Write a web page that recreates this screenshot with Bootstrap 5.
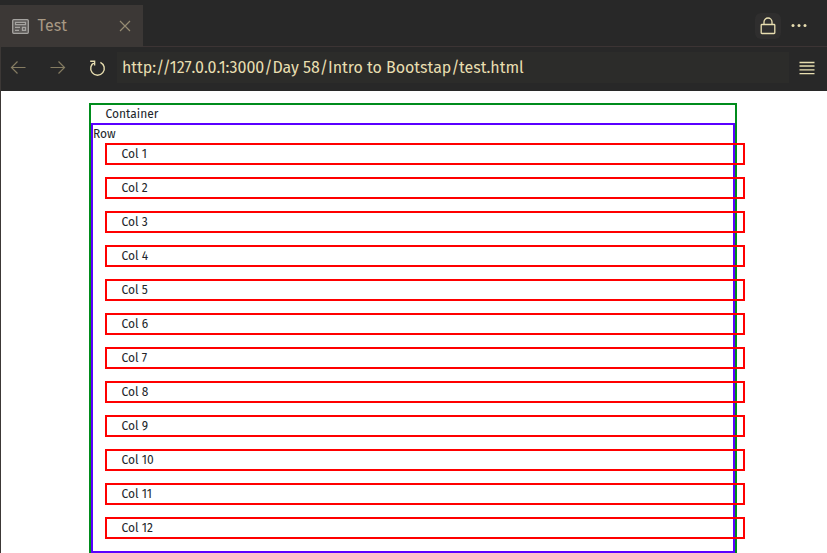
<!DOCTYPE html>
<html lang="en">
<head>
<meta charset="utf-8">
<meta name="viewport" content="width=device-width, initial-scale=1">
<title>Test</title>
<link href="https://cdn.jsdelivr.net/npm/bootstrap@5.3.0/dist/css/bootstrap.min.css" rel="stylesheet">
<style>
body{height:553px;overflow:hidden;background:#282828;font-family:"Fira Sans","Noto Sans",sans-serif}
svg{display:block;flex:none;fill:none;stroke:currentColor}
.tab-strip{height:47px;padding-top:5px;border-bottom:1px solid #3c3434}
.editor-tab{width:143px;height:42px;background:#3c3836;color:#a89984;padding:0 12px;margin-bottom:-1px}
.tab-icon{color:#a5a3a0}
.tab-title{font-size:16px;line-height:20px;margin-left:8.6px}
.tab-close{color:#958b72}
.actions{color:#e8deb0;padding-right:20px}
.lock-btn{width:26px;height:26px;border-radius:6px;background:#2f2e2e;margin-right:10px}
.pane{border-left:1px solid #3c3836;height:506px}
.address-bar{height:44px;color:#e8deb0;padding:0 12px 3px 9px}
.nav-arrow{color:#857c62;margin-right:23.5px}
.url-field{height:31px;width:672px;margin-left:11px;padding-left:5px;background:#2c2c2a;font-size:16px;line-height:31px;white-space:nowrap;letter-spacing:-.035px}
.page-view{height:462px;background:#fff;padding:12px 0 0 88px;font-size:12px;line-height:18px;color:#212529}
.outer-box{width:648px;height:470px;border:2px solid #008c1c}
.box-title{padding-left:14.5px;height:18px}
.row-box{border:2px solid #5a00ff;height:430px}
.row-title{height:18px}
.col-box{width:640px;height:22px;border:2px solid #f00;margin:0 0 12px 12px;padding-left:14.5px}
</style>
</head>
<body>
<header class="tab-strip d-flex justify-content-between">
  <div class="editor-tab d-flex align-items-center">
    <svg class="tab-icon" width="17" height="15" viewBox="0 0 17 15" stroke-width="1.3"><rect x=".7" y=".7" width="15.6" height="13.6" rx="1" fill="#5c5957"/><path d="M3.5 3.5h10v2.2h-10z" fill="#3c3836"/><path d="M3 8.4h5M3 11.4h4M10.5 8.4h3v3h-3z"/></svg>
    <span class="tab-title">Test</span>
    <svg class="tab-close ms-auto" width="12" height="12" viewBox="0 0 12 12" stroke-width="1.2"><path d="M1 1l10 10M11 1L1 11"/></svg>
  </div>
  <div class="actions d-flex align-items-center">
    <div class="lock-btn d-flex align-items-center justify-content-center">
      <svg width="16" height="18" viewBox="0 0 16 18" stroke-width="1.3"><rect x="1.2" y="7.5" width="13.6" height="9" rx=".7"/><path d="M4 7.5V5a4 4 0 0 1 8 0v2.5"/></svg>
    </div>
    <svg width="16" height="4" viewBox="0 0 16 4"><g fill="currentColor" stroke="none"><circle cx="2" cy="1.5" r="1.5"/><circle cx="8" cy="1.5" r="1.5"/><circle cx="14" cy="1.5" r="1.5"/></g></svg>
  </div>
</header>
<div class="pane">
  <nav class="address-bar d-flex align-items-center">
    <svg class="nav-arrow" width="16" height="14" viewBox="0 0 16 14" stroke-width="1.2"><path d="M15.5 6.5H1.5M7.5.5l-6 6 6 6"/></svg>
    <svg class="nav-arrow" width="16" height="14" viewBox="0 0 16 14" stroke-width="1.2"><path d="M.5 6.5h14M8.5.5l6 6-6 6"/></svg>
    <svg width="17" height="16" viewBox="0 0 17 16" stroke-width="1.4"><path d="M5.6 2.3a6.8 6.8 0 1 0 5.8 0M1.2 1.2h4.4v4.4"/></svg>
    <div class="url-field"><span>http://127.0.0.1:3000/Day 58/Intro to Bootstap/test.html</span></div>
    <svg class="ms-auto" width="16" height="14" viewBox="0 0 16 14" stroke-width="1.3"><path d="M.5 1.5h15M.5 5h15M.5 8.8h15M.5 12.6h15"/></svg>
  </nav>
  <main class="page-view">
    <div class="outer-box">
      <div class="box-title"><span>Container</span></div>
      <div class="row-box">
        <div class="row-title"><span>Row</span></div>
        <div class="col-box"><span>Col 1</span></div>
        <div class="col-box"><span>Col 2</span></div>
        <div class="col-box"><span>Col 3</span></div>
        <div class="col-box"><span>Col 4</span></div>
        <div class="col-box"><span>Col 5</span></div>
        <div class="col-box"><span>Col 6</span></div>
        <div class="col-box"><span>Col 7</span></div>
        <div class="col-box"><span>Col 8</span></div>
        <div class="col-box"><span>Col 9</span></div>
        <div class="col-box"><span>Col 10</span></div>
        <div class="col-box"><span>Col 11</span></div>
        <div class="col-box"><span>Col 12</span></div>
      </div>
    </div>
  </main>
</div>
<script src="https://cdn.jsdelivr.net/npm/bootstrap@5.3.0/dist/js/bootstrap.bundle.min.js"></script>
</body>
</html>
